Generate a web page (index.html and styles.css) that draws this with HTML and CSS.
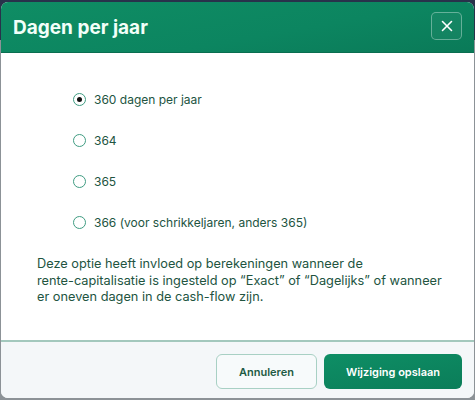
FILE: index.html
```html
<!DOCTYPE html>
<html lang="nl">
<head>
<meta charset="utf-8">
<title>Dagen per jaar</title>
<link rel="stylesheet" href="styles.css">
</head>
<body>
<div class="modal">
  <header class="modal-header">
    <h1 class="modal-title">Dagen per jaar</h1>
    <button class="close-btn" aria-label="Sluiten">
      <svg width="12" height="12" viewBox="0 0 12 12"><path d="M1.5 1.5 L10.5 10.5 M10.5 1.5 L1.5 10.5" stroke="#ffffff" stroke-width="1.6" stroke-linecap="round"/></svg>
    </button>
  </header>
  <div class="modal-body">
    <ul class="options">
      <li class="option"><span class="radio checked"></span><span class="label">360 dagen per jaar</span></li>
      <li class="option"><span class="radio"></span><span class="label">364</span></li>
      <li class="option"><span class="radio"></span><span class="label">365</span></li>
      <li class="option"><span class="radio"></span><span class="label">366 (voor schrikkeljaren, anders 365)</span></li>
    </ul>
    <p class="note">Deze optie heeft invloed op berekeningen wanneer de<br>rente-capitalisatie is ingesteld op “Exact” of “Dagelijks” of wanneer<br>er oneven dagen in de cash-flow zijn.</p>
  </div>
  <footer class="modal-footer">
    <button class="btn btn-secondary">Annuleren</button>
    <button class="btn btn-primary">Wijziging opslaan</button>
  </footer>
</div>
</body>
</html>
```
FILE: styles.css
```css
html, body {
  margin: 0;
  padding: 0;
  height: 100%;
}
body {
  background: linear-gradient(#28324b 0, #28324b 40px, #8c9297 40px);
  font-family: Inter, "Noto Sans", sans-serif;
  color: #22543f;
  overflow: hidden;
}
.modal {
  margin: 2px 1px 0 1px;
  height: 396px;
  background: #ffffff;
  border-radius: 7px;
  overflow: hidden;
  display: flex;
  flex-direction: column;
}
.modal-header {
  height: 51px;
  box-sizing: border-box;
  background: linear-gradient(170deg, #0f8d64 0%, #0c8560 60%, #0a7a58 100%);
  display: flex;
  align-items: center;
  justify-content: space-between;
  padding: 0 12px 0 12px;
  border-bottom: 1px solid #0a6e50;
}
.modal-title {
  margin: 0;
  font-size: 19px;
  font-weight: 700;
  color: #f2fff9;
}
.close-btn {
  width: 31px;
  height: 28px;
  border: 1px solid rgba(255,255,255,0.35);
  border-radius: 5px;
  background: rgba(255,255,255,0.04);
  display: flex;
  align-items: center;
  justify-content: center;
  padding: 0;
  margin-top: -2px;
}
.modal-body {
  flex: 1;
  padding: 36px 12px 0 36px;
}
.options {
  list-style: none;
  margin: 0 0 0 36px;
  padding: 0;
  display: flex;
  flex-direction: column;
  gap: 21px;
}
.option {
  display: flex;
  align-items: center;
  height: 20px;
  gap: 8px;
  font-size: 12px;
}
.radio {
  width: 11px;
  height: 11px;
  border: 1px solid #3f9c82;
  border-radius: 50%;
  box-sizing: content-box;
  display: flex;
  align-items: center;
  justify-content: center;
  background: #fff;
}
.radio.checked::after {
  content: "";
  width: 5px;
  height: 5px;
  border-radius: 50%;
  background: #111;
}
.note {
  margin: 24px 0 0 0;
  font-size: 12.75px;
  line-height: 16.5px;
  white-space: nowrap;
}
.modal-footer {
  height: 58px;
  box-sizing: border-box;
  border-top: 2px solid #a3c8bd;
  background: #f4f7f9;
  display: flex;
  justify-content: flex-end;
  align-items: flex-start;
  gap: 7px;
  padding: 12px 12px 0 0;
}
.btn {
  height: 35px;
  border-radius: 6px;
  font-family: Inter, "Noto Sans", sans-serif;
  font-size: 11px;
  font-weight: 600;
  padding: 0;
}
.btn-secondary {
  width: 101px;
  background: #f7fafb;
  border: 1px solid #a8d0c4;
  color: #1e5a44;
}
.btn-primary {
  width: 138px;
  background: linear-gradient(170deg, #0e8e65, #0b7d59);
  border: none;
  color: #ffffff;
}
```
